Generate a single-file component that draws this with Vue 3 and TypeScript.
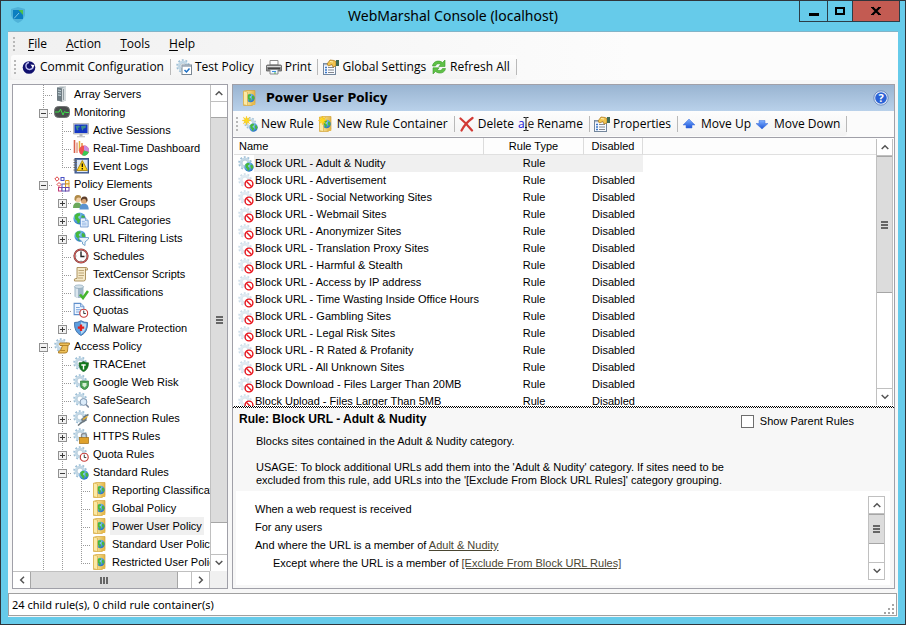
<script setup lang="ts">
import { ref } from 'vue'

type Guide = 'line' | 'tee' | 'end'

interface Node {
  label: string
  icon: string
  guides: Guide[]
  box?: 'plus' | 'minus'
}

interface Tool {
  label: string
  icon: string
  sep?: boolean
}

const menus = ['File', 'Action', 'Tools', 'Help']

const mainTools: Tool[] = [
  { label: 'Commit Configuration', icon: 'commit', sep: true },
  { label: 'Test Policy', icon: 'test', sep: true },
  { label: 'Print', icon: 'print', sep: true },
  { label: 'Global Settings', icon: 'props' },
  { label: 'Refresh All', icon: 'refresh', sep: true },
]

const policyTools: Tool[] = [
  { label: 'New Rule', icon: 'newrule' },
  { label: 'New Rule Container', icon: 'newfolder', sep: true },
  { label: 'Delete', icon: 'delete' },
  { label: 'Rename', icon: 'rename', sep: true },
  { label: 'Properties', icon: 'props', sep: true },
  { label: 'Move Up', icon: 'up' },
  { label: 'Move Down', icon: 'down', sep: true },
]

const nodes: Node[] = [
  { label: 'Array Servers', icon: 'server', guides: ['tee'] },
  { label: 'Monitoring', icon: 'pulse', guides: ['tee'], box: 'minus' },
  { label: 'Active Sessions', icon: 'screen', guides: ['line', 'tee'] },
  { label: 'Real-Time Dashboard', icon: 'charts', guides: ['line', 'tee'] },
  { label: 'Event Logs', icon: 'eventlog', guides: ['line', 'end'] },
  { label: 'Policy Elements', icon: 'elements', guides: ['tee'], box: 'minus' },
  { label: 'User Groups', icon: 'users', guides: ['line', 'tee'], box: 'plus' },
  { label: 'URL Categories', icon: 'globedoc', guides: ['line', 'tee'], box: 'plus' },
  { label: 'URL Filtering Lists', icon: 'globefilter', guides: ['line', 'tee'], box: 'plus' },
  { label: 'Schedules', icon: 'clock', guides: ['line', 'tee'] },
  { label: 'TextCensor Scripts', icon: 'script', guides: ['line', 'tee'] },
  { label: 'Classifications', icon: 'classify', guides: ['line', 'tee'] },
  { label: 'Quotas', icon: 'quota', guides: ['line', 'tee'] },
  { label: 'Malware Protection', icon: 'malware', guides: ['line', 'end'], box: 'plus' },
  { label: 'Access Policy', icon: 'access', guides: ['tee'], box: 'minus' },
  { label: 'TRACEnet', icon: 'trace', guides: ['line', 'tee'] },
  { label: 'Google Web Risk', icon: 'webrisk', guides: ['line', 'tee'] },
  { label: 'SafeSearch', icon: 'safesearch', guides: ['line', 'tee'] },
  { label: 'Connection Rules', icon: 'connection', guides: ['line', 'tee'], box: 'plus' },
  { label: 'HTTPS Rules', icon: 'https', guides: ['line', 'tee'], box: 'plus' },
  { label: 'Quota Rules', icon: 'quotarule', guides: ['line', 'tee'], box: 'plus' },
  { label: 'Standard Rules', icon: 'rule', guides: ['line', 'tee'], box: 'minus' },
  { label: 'Reporting Classifications', icon: 'folder', guides: ['line', 'line', 'tee'] },
  { label: 'Global Policy', icon: 'folder', guides: ['line', 'line', 'tee'] },
  { label: 'Power User Policy', icon: 'folder', guides: ['line', 'line', 'tee'] },
  { label: 'Standard User Policy', icon: 'folder', guides: ['line', 'line', 'tee'] },
  { label: 'Restricted User Policy', icon: 'folder', guides: ['line', 'line', 'end'] },
]

const rules = [
  'Block URL - Adult & Nudity',
  'Block URL - Advertisement',
  'Block URL - Social Networking Sites',
  'Block URL - Webmail Sites',
  'Block URL - Anonymizer Sites',
  'Block URL - Translation Proxy Sites',
  'Block URL - Harmful & Stealth',
  'Block URL - Access by IP address',
  'Block URL - Time Wasting Inside Office Hours',
  'Block URL - Gambling Sites',
  'Block URL - Legal Risk Sites',
  'Block URL - R Rated & Profanity',
  'Block URL - All Unknown Sites',
  'Block Download - Files Larger Than 20MB',
  'Block Upload - Files Larger Than 5MB',
].map((name, i) => ({ name, type: 'Rule', disabled: i > 0 }))

const selectedNode = ref('Power User Policy')
const selectedRule = ref(0)
const showParent = ref(false)
</script>

<template>
  <div class="window">
    <svg class="sprite" aria-hidden="true">
      <defs>
        <radialGradient id="gGlobe" cx="0.35" cy="0.3" r="0.8">
          <stop offset="0" stop-color="#9be0fa" /><stop offset="1" stop-color="#1763c0" />
        </radialGradient>
        <linearGradient id="gFolder" x1="0" y1="0" x2="1" y2="0">
          <stop offset="0" stop-color="#fdeeae" /><stop offset="1" stop-color="#e3b648" />
        </linearGradient>
        <linearGradient id="gBlue" x1="0" y1="0" x2="0" y2="1">
          <stop offset="0" stop-color="#7fb0ff" /><stop offset="1" stop-color="#1d55d8" />
        </linearGradient>
        <symbol id="gear" viewBox="0 0 16 16">
          <circle cx="7" cy="7" r="5.900" fill="none" stroke="#9dbfd6" stroke-width="1.800" stroke-dasharray="1.85 1.85" />
          <circle cx="7" cy="7" r="4.200" fill="none" stroke="#c3d8e6" stroke-width="2.400" />
          <circle cx="7" cy="7" r="2.900" fill="#fff" stroke="#93b4ca" stroke-width="0.600" />
        </symbol>
        <symbol id="globe" viewBox="0 0 16 16">
          <circle cx="8" cy="8" r="7.500" fill="url(#gGlobe)" />
          <path d="M2 4 5 1.500 8.500 1.500 9 4 6.500 5.500 6.500 7.500 9 9.500 8 13 6 14.500 5 11 2.500 8.500ZM11 4 14 5 15 8.500 12.500 12 11 9 10 6.500Z" fill="#46b83c" />
        </symbol>
        <symbol id="clockface" viewBox="0 0 16 16">
          <circle cx="8" cy="8" r="6.700" fill="#fff" stroke="#c9403c" stroke-width="2" />
          <path d="M8 3.500V8.500H11.500" fill="none" stroke="#222" stroke-width="1.500" />
        </symbol>
        <symbol id="star" viewBox="0 0 16 16">
          <path d="M8 0 9.500 5 14 2 11 6.500 16 8 11 9.500 14 14 9.500 11 8 16 6.500 11 2 14 5 9.500 0 8 5 6.500 2 2 6.500 5Z" fill="#ffd91c" stroke="#f0b400" stroke-width="0.500" />
        </symbol>
        <symbol id="i-logo" viewBox="0 0 16 16">
          <path d="M8 0 15 2V8Q14 13 8 16 2 13 1 8V2Z" fill="#4fb2d8" />
          <rect x="3" y="3" width="10" height="9" fill="#0b7fc0" />
          <path d="M8.500 3H13V8Z" fill="#4fc04a" /><path d="M4 11.500 9 6" stroke="#7cc6e6" fill="none" />
        </symbol>
        <symbol id="i-commit" viewBox="0 0 16 16">
          <circle cx="8" cy="8.500" r="6.300" fill="#10106e" />
          <path d="M8 3.500A3.500 3.500 0 0 0 5.500 9 4 4 0 0 0 12 8.500" fill="none" stroke="#b9b9ee" stroke-width="1.500" />
          <path d="M9.500 5.500 13.500 6 12 9.500Z" fill="#fff" /><circle cx="8.500" cy="7.500" r="1.800" fill="#10106e" />
        </symbol>
        <symbol id="i-test" viewBox="0 0 16 16">
          <use href="#gear" width="16" height="16" />
          <rect x="6" y="6" width="9.500" height="9.500" fill="#fff" stroke="#7a8794" /><path d="M6 7H15" stroke="#98a6b5" stroke-width="1.500" />
          <path d="M8.500 11 10.500 13 13.500 9.500" fill="none" stroke="#1c6fc4" stroke-width="1.500" />
        </symbol>
        <symbol id="i-print" viewBox="0 0 16 16">
          <path d="M4 1.500H12V6H4Z" fill="#fff" stroke="#8b8b8b" />
          <path d="M1.500 6H14.500Q15.500 6 15.500 7V12H.5V7Q.5 6 1.500 6Z" fill="#8a8a8a" stroke="#5b5b5b" stroke-width="0.800" />
          <path d="M1 7.500H15" stroke="#d8d8d8" /><path d="M2 9.500H14" stroke="#444" stroke-width="1.600" />
          <path d="M4 10.500H12V15H4Z" fill="#eef6ff" stroke="#8b8b8b" /><path d="M6 12.500H10" stroke="#3c8ee0" /><path d="M8 14H10" stroke="#4cb34c" />
        </symbol>
        <symbol id="i-props" viewBox="0 0 16 16">
          <rect x="0.500" y="4.500" width="12" height="11" fill="#f7faff" stroke="#73869c" /><path d="M1 5.500H12" stroke="#a8b7cb" stroke-width="1.500" />
          <path d="M2 8.500H4M2 11H4M2 13.500H4" stroke="#3977c9" stroke-width="1.300" /><path d="M5 8.500H11M5 11H11M5 13.500H11" stroke="#85898f" />
          <path d="M4 5 7 1 11 1.500 13 2.500V7L10 8 9 5.500 5.500 7Z" fill="#f0c34e" stroke="#a8741a" stroke-width="0.700" /><path d="M7 2.500 10 3" stroke="#fff1b0" />
          <rect x="13" y="1" width="3" height="6" fill="#3e6a56" />
        </symbol>
        <symbol id="i-refresh" viewBox="0 0 16 16">
          <path d="M1.500 7C2 2.500 7.500.500 11.500 3.500L14 1V7.500H7.800L9.800 5.300C7.500 4 5 5 4.500 7Z" fill="#5fc146" stroke="#3a9a2c" stroke-width="0.600" />
          <path d="M14.500 9.500C14 14 8.500 15.500 4.500 12.500L2 15V8.800H8.200L6.200 11C8.500 12 11 11.500 11.500 9.500Z" fill="#5fc146" stroke="#3a9a2c" stroke-width="0.600" />
        </symbol>
        <symbol id="i-folder" viewBox="0 0 16 16">
          <path d="M1.500 1.500 4 .500H13V13.500L10 15.500H1.500Z" fill="url(#gFolder)" stroke="#d3a53c" stroke-width="0.700" />
          <use href="#globe" x="4" y="3" width="9" height="10" />
          <path d="M1.500 1 5.500 2V15.800L1.500 14.500Z" fill="#fbe9a6" stroke="#d6a93f" stroke-width="0.600" />
          <path d="M9.500 13.500 13.200 12.500V15H9.500Z" fill="#e6b94e" />
        </symbol>
        <symbol id="i-rule" viewBox="0 0 16 16">
          <use href="#gear" width="16" height="16" /><use href="#globe" x="6" y="6" width="10" height="10" />
        </symbol>
        <symbol id="i-newrule" viewBox="0 0 16 16">
          <use href="#gear" width="14" height="14" x="2" y="1" /><use href="#globe" x="7" y="7" width="9" height="9" /><use href="#star" width="9" height="9" />
        </symbol>
        <symbol id="i-newfolder" viewBox="0 0 16 16">
          <use href="#i-folder" width="16" height="16" /><use href="#star" width="9" height="9" />
        </symbol>
        <symbol id="i-delete" viewBox="0 0 16 16">
          <path d="M1.500 2.500Q7 7 13 14.500M13.500 2Q6 7.500 2.500 14.500" fill="none" stroke="#d23a35" stroke-width="2.200" stroke-linecap="round" />
        </symbol>
        <symbol id="i-rename" viewBox="0 0 16 16">
          <text x="0" y="12" class="blue-letter">a</text><text x="9.500" y="12" class="dark-letter">e</text>
          <path d="M5.500 1.500H7.500L8 2 8.500 1.500H10.500M8 2V14M5.500 14.500H7.500L8 14 8.500 14.500H10.500M7 11.500H9" fill="none" stroke="#111" />
        </symbol>
        <symbol id="i-up" viewBox="0 0 16 16"><path d="M7 3 13 9H10V12H4V9H1Z" fill="url(#gBlue)" stroke="#3c6fd8" stroke-width="0.500" /></symbol>
        <symbol id="i-down" viewBox="0 0 16 16"><path d="M7 13 13 7.500H10V4.500H4V7.500H1Z" fill="url(#gBlue)" stroke="#3c6fd8" stroke-width="0.500" /></symbol>
        <symbol id="i-help" viewBox="0 0 16 16">
          <circle cx="8" cy="8" r="6.400" fill="#2a62d6" stroke="#e3ebf8" stroke-width="1.200" /><circle cx="8" cy="8" r="7.200" fill="none" stroke="#5878b4" stroke-width="0.700" />
          <text x="8" y="12" text-anchor="middle" class="help-letter">?</text>
        </symbol>
        <symbol id="i-server" viewBox="0 0 16 16">
          <path d="M3 1.500 6 .500H12V14.500L8.500 15.800 3 14.500Z" fill="#a9b3b8" /><path d="M3 1.500 8 2.500V15.800L3 14.500Z" fill="#6f7c83" /><path d="M8 2.500 12 .500V14.500L8 15.800Z" fill="#d5dbdd" />
          <path d="M4 4 7 4.500M4 6.500 7 7M4 9 7 9.500" stroke="#c5d6dc" /><path d="M9.500 3V14" stroke="#8f9a9f" />
        </symbol>
        <symbol id="i-pulse" viewBox="0 0 16 16">
          <rect x="0.500" y="2.500" width="15" height="11" rx="4" fill="#4a4d4d" stroke="#6f7373" /><path d="M1 8H5L6.500 5 9 11 10.500 7.500 12 8.500H15" fill="none" stroke="#3be04b" />
        </symbol>
        <symbol id="i-screen" viewBox="0 0 16 16">
          <path d="M.5 1.500H15.500V12H.5Z" fill="#d6d8da" stroke="#9a9da0" stroke-width="0.600" /><path d="M1.500 2.500H14.500V11H1.500Z" fill="#1436c4" />
          <path d="M2.500 4 6 3.500 7 5 5 6 5.500 8 4 8.500ZM8 4 13 3.500 12.500 6 10.500 6.500 9.500 9 8.500 6.500Z" fill="#4fb070" opacity="0.700" /><path d="M6.500 12H9.500V14H6.500Z" fill="#b5b8ba" /><path d="M4 14.700H12" stroke="#c2c5c8" stroke-width="1.300" />
        </symbol>
        <symbol id="i-charts" viewBox="0 0 16 16">
          <path d="M1.500 0V13" stroke="#d8604a" stroke-width="1.600" /><path d="M4 2.500V13" stroke="#e8a08c" stroke-width="1.600" /><path d="M6.500 1V11" stroke="#d9b53c" stroke-width="1.500" /><path d="M9 3V10" stroke="#e58a3c" stroke-width="1.500" />
          <circle cx="11" cy="10.500" r="5" fill="#ef5252" /><path d="M11 10.500V5.500A5 5 0 0 1 15.800 12Z" fill="#c98ae0" /><path d="M11 10.500 15.800 12A5 5 0 0 1 9 15.200Z" fill="#38c957" />
        </symbol>
        <symbol id="i-eventlog" viewBox="0 0 16 16">
          <rect x="2" y="0.500" width="13.500" height="14.500" fill="#5a78ad" stroke="#3a5286" /><rect x="4" y="2" width="10.500" height="12" fill="#dce6f3" />
          <path d="M.5 2H4M.5 4.500H4M.5 7H4M.5 9.500H4M.5 12H4" stroke="#666" /><path d="M9.300 2.500 14.500 12.500H4Z" fill="#ffd31a" stroke="#a37c00" stroke-width="0.800" stroke-linejoin="round" /><path d="M9.300 5.500V9M9.300 10V11.500" stroke="#111" stroke-width="1.300" />
        </symbol>
        <symbol id="i-elements" viewBox="0 0 16 16">
          <path d="M3 .800 5.200 3 3 5.200.8 3Z" fill="#fff" stroke="#d44" /><rect x="7" y="1.500" width="3" height="3" fill="#fff" stroke="#4850c4" /><path d="M5 6.500 7 8.500 5 10.500 3 8.500Z" fill="#fff" stroke="#d44" />
          <path d="M11.500 4.500H15V8H11.500Z" fill="#fff3cc" stroke="#d8971f" /><rect x="8" y="8" width="3.500" height="3.500" fill="#fff" stroke="#4e57b8" /><rect x="11.500" y="8" width="3.500" height="3.500" fill="#fff3cc" stroke="#d8971f" />
          <rect x="4.500" y="11.500" width="3.500" height="3.500" fill="#fff" stroke="#c03a78" /><rect x="8" y="11.500" width="3.500" height="3.500" fill="#fff" stroke="#4e57b8" /><rect x="11.500" y="11.500" width="3.500" height="3.500" fill="#fff" stroke="#6a44a8" />
        </symbol>
        <symbol id="i-users" viewBox="0 0 16 16">
          <path d="M0 14Q0 8.500 4.500 8.500 8.500 8.500 9 14Z" fill="#6ba85a" /><circle cx="5" cy="5" r="3.200" fill="#f0cda4" /><path d="M1.500 6Q1 1 5 1 8.500 1 8 4 5 2.800 3.500 4.500L3 7Z" fill="#b08a48" />
          <path d="M6.500 15.500Q6.500 9.500 11 9.500 15.500 9.500 15.800 15.500Z" fill="#5a93cf" /><circle cx="11" cy="6.500" r="3.200" fill="#d9a777" /><path d="M8 7Q7.500 2.500 11.500 2.500 15 2.500 14.500 7L13.500 8Q13.500 5 11 4.800 9 5 8 7Z" fill="#5b3d2a" />
        </symbol>
        <symbol id="doc" viewBox="0 0 16 16"><path d="M1.500.500H10L14.500 5V15.500H1.500Z" fill="#eef5ff" stroke="#5f8fcb" stroke-width="1.400" /><path d="M10 .500V5H14.500" fill="#c6dbf5" stroke="#5f8fcb" /><path d="M4 6H9M4 9H12M4 12H12" stroke="#7ba7dd" stroke-width="1.400" /></symbol>
        <symbol id="i-globedoc" viewBox="0 0 16 16"><use href="#globe" width="13" height="13" /><use href="#doc" x="6.500" y="5" width="9.500" height="11" /></symbol>
        <symbol id="i-globefilter" viewBox="0 0 16 16"><use href="#globe" x="1" width="12" height="12" /><path d="M6 7.500H15.500V9L12 12V15.500L9.500 14V12L6 9Z" fill="#e9f3fb" stroke="#6c9fc8" stroke-width="0.900" /></symbol>
        <symbol id="i-clock" viewBox="0 0 16 16">
          <circle cx="8" cy="8" r="6.600" fill="#fdfdfd" stroke="#7c4140" stroke-width="2" /><circle cx="8" cy="8" r="6.600" fill="none" stroke="#d45a55" stroke-width="1" /><path d="M8 3.500V8.500H11.500" fill="none" stroke="#222" stroke-width="1.400" /><path d="M8 2.500V3.300M8 12.700V13.500M2.500 8H3.300M12.700 8H13.500" stroke="#555" />
        </symbol>
        <symbol id="i-script" viewBox="0 0 16 16">
          <path d="M4 1.500H13Q15 1.500 14.500 4H12.500V13Q12.500 15 10.500 15H1.500Q.5 12.500 3 12.500H4Z" fill="#f5e9c8" stroke="#a68a55" stroke-width="0.900" /><path d="M5.500 4.500H11M5.500 7H11M5.500 9.500H11M5 12H10" stroke="#bca678" /><path d="M12.500 4V2.500" stroke="#a68a55" />
        </symbol>
        <symbol id="i-classify" viewBox="0 0 16 16">
          <path d="M1.500 2.500V12.500Q6 15.500 10.500 12.500V2.500Z" fill="#9fb7c8" /><path d="M2.500 3.500V13Q4 14 5 14V4Z" fill="#dbe6ee" /><ellipse cx="6" cy="2.700" rx="4.500" ry="1.800" fill="#d4e1ea" stroke="#8ba5b6" stroke-width="0.700" />
          <path d="M7 10.500 10 14 15 7" fill="none" stroke="#45b52d" stroke-width="2.600" />
        </symbol>
        <symbol id="i-quota" viewBox="0 0 16 16"><use href="#doc" width="12" height="14" /><use href="#clockface" x="6" y="6.500" width="9.500" height="9.500" /></symbol>
        <symbol id="i-malware" viewBox="0 0 16 16">
          <path d="M8 .700Q11 2.700 14.500 2.500 15 12 8 15.500 1 12 1.500 2.500 5 2.700 8 .700Z" fill="#5c9fe0" stroke="#4876ae" /><path d="M8 2Q10 3.500 13.300 3.600 13.300 11 8 14.200Z" fill="#b9daf5" /><path d="M8 4.500V11M4.800 7.700H11.200" stroke="#e02020" stroke-width="2.300" />
        </symbol>
        <symbol id="i-access" viewBox="0 0 16 16"><use href="#gear" width="16" height="16" /><path d="M6 5H15.500Q16 7 14 7.500L13.500 13Q13.500 15 11 15H4.500Q4 12.500 6.500 12.500L8.500 7.500H6Q4.800 6 6 5Z" fill="#ecc05a" stroke="#a9781f" stroke-width="0.900" /><path d="M6.500 7.500H14M6.500 12.500H11" stroke="#a9781f" stroke-width="0.800" /></symbol>
        <symbol id="i-trace" viewBox="0 0 16 16"><use href="#gear" width="16" height="16" /><path d="M10.500 5.500Q13 7 15.500 6.800 15.500 13.500 10.500 15.800 6 13.500 6 6.800 8.500 7 10.500 5.500Z" fill="#117a1f" stroke="#0a5414" stroke-width="0.600" /><path d="M8.300 9H12.700M10.500 9V13.500" stroke="#fff" stroke-width="1.400" /></symbol>
        <symbol id="i-webrisk" viewBox="0 0 16 16"><use href="#gear" width="16" height="16" /><path d="M7.500 7H15.500V11.500Q15 14.500 11.500 15.800 8 14.500 7.500 11.500Z" fill="#4fa356" stroke="#2f7d3a" stroke-width="0.700" /><path d="M9.500 9H13.500V11.500L11.500 13.500 9.500 11.500Z" fill="#d6efd4" /></symbol>
        <symbol id="i-safesearch" viewBox="0 0 16 16"><use href="#gear" width="16" height="16" /><circle cx="10.500" cy="10" r="3.400" fill="#dcecfa" stroke="#8299b3" /><path d="M13 12.500 15.800 15.500" stroke="#7d8ba0" stroke-width="1.600" /></symbol>
        <symbol id="i-connection" viewBox="0 0 16 16"><use href="#gear" width="16" height="16" /><path d="M15.500 4.500 11 7 13 10 8.500 12.500 5 15.500" fill="none" stroke="#6a747b" stroke-width="1.500" /><path d="M8 9 13 6 14 8.500 9 12Z" fill="#777f85" /><path d="M10 9.500 14.500 6.500" stroke="#ecb52c" stroke-width="1.500" /></symbol>
        <symbol id="i-https" viewBox="0 0 16 16"><use href="#gear" width="16" height="16" /><path d="M8.500 10V7.500Q8.500 5.500 11 5.500 13.500 5.500 13.500 7.500V10" fill="none" stroke="#8b8f94" stroke-width="1.400" /><rect x="6.500" y="9.500" width="9" height="6" fill="#dfa12c" stroke="#9f6c13" stroke-width="0.700" /></symbol>
        <symbol id="i-quotarule" viewBox="0 0 16 16"><use href="#gear" width="16" height="16" /><use href="#clockface" x="6.500" y="6.500" width="9.500" height="9.500" /></symbol>
        <symbol id="i-blocked" viewBox="0 0 16 16"><use href="#gear" width="16" height="16" opacity="0.500" /><circle cx="11" cy="11" r="3.900" fill="#fff" stroke="#e8141c" stroke-width="1.400" /><path d="M8.300 8.300 13.700 13.700" stroke="#e8141c" stroke-width="1.400" /></symbol>
        <symbol id="a-up" viewBox="0 0 8 6"><path d="M.7 5 4 1.700 7.300 5" fill="none" stroke="#555" stroke-width="1.500" /></symbol>
        <symbol id="a-down" viewBox="0 0 8 6"><path d="M.7 1 4 4.300 7.300 1" fill="none" stroke="#555" stroke-width="1.500" /></symbol>
        <symbol id="a-left" viewBox="0 0 6 8"><path d="M5 .700 1.700 4 5 7.300" fill="none" stroke="#555" stroke-width="1.500" /></symbol>
        <symbol id="a-right" viewBox="0 0 6 8"><path d="M1 .700 4.300 4 1 7.300" fill="none" stroke="#555" stroke-width="1.500" /></symbol>
      </defs>
    </svg>

    <header class="titlebar">
      <svg class="icon logo"><use href="#i-logo" /></svg>
      <h1>WebMarshal Console (localhost)</h1>
      <div class="caption">
        <button type="button" class="cap" aria-label="Minimize"><svg width="10" height="10"><path d="M0 8.500H10" stroke="#000" stroke-width="3" /></svg></button>
        <button type="button" class="cap middle" aria-label="Maximize"><svg width="10" height="10"><rect x="1" y="2" width="8" height="6" fill="none" stroke="#000" stroke-width="2" /></svg></button>
        <button type="button" class="cap close" aria-label="Close"><svg width="10" height="10"><path d="M1.500 1.500 8.500 8.500M8.500 1.500 1.500 8.500" stroke="#000" stroke-width="2.200" /><path d="M0 1.500H3M7 1.500H10M0 8.500H3M7 8.500H10" stroke="#000" /></svg></button>
      </div>
    </header>

    <main class="client">
      <nav class="menubar">
        <span class="grip"></span>
        <button v-for="m in menus" :key="m" type="button" class="menu"><u>{{ m[0] }}</u>{{ m.slice(1) }}</button>
      </nav>
      <div class="strip">
        <div class="toolbar">
          <span class="grip"></span>
          <template v-for="t in mainTools" :key="t.label">
            <button type="button" class="tool"><svg class="icon"><use :href="'#i-' + t.icon" /></svg>{{ t.label }}</button>
            <span v-if="t.sep" class="sep"></span>
          </template>
        </div>
      </div>

      <div class="body">
        <section class="treepane">
          <div class="treemain">
            <ul class="tree">
              <li v-for="n in nodes" :key="n.label" class="node">
                <span v-for="(g, i) in n.guides" :key="i" class="guide" :class="g">
                  <button v-if="n.box && i === n.guides.length - 1" type="button" class="box" :class="n.box" :aria-label="n.label"></button>
                </span>
                <svg class="icon"><use :href="'#i-' + n.icon" /></svg>
                <button type="button" class="label" :class="{ on: n.label === selectedNode }" @click="selectedNode = n.label">{{ n.label }}</button>
              </li>
            </ul>
            <div class="vscroll">
              <button type="button" aria-label="Up"><svg width="8" height="6"><use href="#a-up" /></svg></button>
              <span class="gap-start"></span><span class="thumb tree-thumb"><i></i></span><span class="gap-end"></span>
              <button type="button" aria-label="Down"><svg width="8" height="6"><use href="#a-down" /></svg></button>
            </div>
          </div>
          <div class="hrow">
            <div class="hscroll">
              <button type="button" aria-label="Left"><svg width="6" height="8"><use href="#a-left" /></svg></button>
              <span class="thumb"><i></i></span><span class="hgap"></span>
              <button type="button" aria-label="Right"><svg width="6" height="8"><use href="#a-right" /></svg></button>
            </div>
          </div>
        </section>

        <section class="policy">
          <div class="banner">
            <svg class="icon"><use href="#i-folder" /></svg>
            <h2>Power User Policy</h2>
            <button type="button" class="help" aria-label="Help"><svg class="icon"><use href="#i-help" /></svg></button>
          </div>
          <div class="subbar">
            <div class="toolbar">
              <span class="grip"></span>
              <template v-for="t in policyTools" :key="t.label">
                <button type="button" class="tool"><svg class="icon"><use :href="'#i-' + t.icon" /></svg>{{ t.label }}</button>
                <span v-if="t.sep" class="sep"></span>
              </template>
            </div>
          </div>

          <div class="list">
            <div class="rows">
              <table>
                <colgroup><col class="c-name" /><col class="c-type" /><col class="c-dis" /><col /></colgroup>
                <thead>
                  <tr><th class="name">Name</th><th>Rule Type</th><th>Disabled</th><td></td></tr>
                </thead>
                <tbody>
                  <tr v-for="(r, i) in rules" :key="r.name" :class="{ on: i === selectedRule }" @click="selectedRule = i">
                    <td class="first"><div class="cell"><svg class="icon"><use :href="r.disabled ? '#i-blocked' : '#i-rule'" /></svg><span>{{ r.name }}</span></div></td>
                    <td class="mid">{{ r.type }}</td>
                    <td class="mid">{{ r.disabled ? 'Disabled' : '' }}</td>
                    <td class="rest"></td>
                  </tr>
                </tbody>
              </table>
            </div>
            <div class="vscroll">
              <button type="button" aria-label="Up"><svg width="8" height="6"><use href="#a-up" /></svg></button>
              <span class="thumb list-thumb"><i></i></span><span class="list-gap"></span>
              <button type="button" aria-label="Down"><svg width="8" height="6"><use href="#a-down" /></svg></button>
            </div>
          </div>
          <div class="splitter"></div>

          <div class="detail">
            <div class="detail-head">
              <h3>Rule: Block URL - Adult &amp; Nudity</h3>
              <label class="parent"><input v-model="showParent" type="checkbox" />Show Parent Rules</label>
            </div>
            <div class="desc">
              <p>Blocks sites contained in the Adult &amp; Nudity category.</p>
              <p>USAGE: To block additional URLs add them into the 'Adult &amp; Nudity' category. If sites need to be excluded from this rule, add URLs into the '[Exclude From Block URL Rules]' category grouping.</p>
            </div>
            <div class="conditions">
              <div class="lines">
                <p>When a web request is received</p>
                <p>For any users</p>
                <p>And where the URL is a member of <a href="#">Adult &amp; Nudity</a></p>
                <p class="inner">Except where the URL is a member of <a href="#">[Exclude From Block URL Rules]</a></p>
              </div>
              <div class="vscroll boxed">
                <button type="button" aria-label="Up"><svg width="8" height="6"><use href="#a-up" /></svg></button>
                <span class="thumb cond-thumb"><i></i></span><span class="cond-gap"></span>
                <button type="button" aria-label="Down"><svg width="8" height="6"><use href="#a-down" /></svg></button>
              </div>
            </div>
          </div>
        </section>
      </div>

      <footer class="status">
        <span>24 child rule(s), 0 child rule container(s)</span>
        <svg width="11" height="11"><path d="M8 0h2v2h-2zM4 4h2v2h-2zM8 4h2v2h-2zM0 8h2v2h-2zM4 8h2v2h-2zM8 8h2v2h-2z" fill="#a5a5a5" /></svg>
      </footer>
    </main>
  </div>
</template>

<style>
body {
  margin: 0;
}
</style>

<style scoped>
* {
  box-sizing: border-box;
}
.window {
  display: flex;
  flex-direction: column;
  height: 100vh;
  padding: 0 7px 7px;
  border: 1px solid #30343a;
  background: #66cbea;
  color: #000;
  font: 11px/13px "Liberation Sans", Arial, sans-serif;
  overflow: hidden;
}
.sprite {
  position: absolute;
  width: 0;
  height: 0;
}
.blue-letter,
.dark-letter {
  font: 12px "Open Sans", sans-serif;
  fill: #1414d2;
}
.dark-letter {
  fill: #222;
}
.help-letter {
  font: bold 11px "Open Sans", sans-serif;
  fill: #fff;
}
button {
  margin: 0;
  padding: 0;
  border: 0;
  background: none;
  color: inherit;
  font: inherit;
}
h1,
h2,
h3,
p,
ul {
  margin: 0;
  padding: 0;
  font-weight: normal;
}
.icon {
  flex: none;
  width: 16px;
  height: 16px;
}

.titlebar {
  display: grid;
  grid-template-columns: 1fr auto 1fr;
  flex: none;
  height: 30px;
}
.logo {
  margin: 6px 0 0 2px;
}
.titlebar h1 {
  font: 14px/30px "Noto Sans", sans-serif;
}
.caption {
  display: flex;
  justify-self: end;
  height: 21px;
  margin-right: -2px;
  border: 1px solid #2b3d47;
  border-top: 0;
}
.cap {
  display: grid;
  place-items: center;
  width: 27px;
}
.cap.middle {
  width: 26px;
  border-right: 1px solid #2b3d47;
  border-left: 1px solid #2b3d47;
}
.cap.close {
  width: 46px;
  background: #c35b52;
}

.client {
  display: flex;
  flex: 1;
  flex-direction: column;
  min-height: 0;
  border-top: 1px solid #82b4c8;
  background: #f7f7f7;
}
.menubar {
  display: flex;
  flex: none;
  align-items: center;
  gap: 19px;
  height: 23px;
  padding-left: 5px;
  background: linear-gradient(90deg, #f0f0f0, #fcfcfc 70%);
  font: 12px/20px "Open Sans", sans-serif;
}
.menubar .grip {
  margin-right: -6px;
}
.menu u {
  text-underline-offset: 2px;
}
.grip {
  flex: none;
  width: 2px;
  height: 14px;
  background: repeating-linear-gradient(#b8b8b8 0 2px, transparent 2px 4px);
}
.strip {
  display: flex;
  flex: none;
  height: 25px;
  padding: 0 0 1px 3px;
  background: linear-gradient(90deg, #f0f0f0, #fcfcfc 70%);
}
.toolbar {
  display: flex;
  align-items: center;
  gap: 5px;
  padding: 0 0 0 3px;
  border-radius: 3px;
  background: linear-gradient(#fdfdfd, #f3f3f3);
  font: 12px/20px "Open Sans", sans-serif;
}
.tool {
  display: flex;
  align-items: center;
  gap: 3px;
  white-space: nowrap;
}
.sep {
  width: 1px;
  height: 16px;
  margin-left: 1px;
  background: #b9b9b9;
}
.subbar .toolbar {
  gap: 4px;
}
.subbar .sep {
  margin-left: 2px;
}

.body {
  display: flex;
  flex: 1;
  gap: 4px;
  min-height: 0;
  padding: 4px 3px 4px 4px;
}
.treepane {
  display: flex;
  flex: none;
  flex-direction: column;
  width: 216px;
  border: 1px solid #a0a0a8;
  background: #fff;
}
.treemain {
  display: flex;
  flex: 1;
  min-height: 0;
}
.tree {
  flex: 1;
  min-width: 0;
  padding-left: 21px;
  overflow: hidden;
  list-style: none;
}
.node {
  display: flex;
  align-items: center;
  height: 18px;
  white-space: nowrap;
}
.guide {
  position: relative;
  flex: none;
  width: 19px;
  height: 18px;
}
.guide::before {
  content: "";
  position: absolute;
  top: 0;
  left: 9px;
  width: 1px;
  height: 18px;
  background: repeating-linear-gradient(#999 0 1px, transparent 1px 2px);
}
.guide.end::before {
  height: 11px;
}
.guide.tee::after,
.guide.end::after {
  content: "";
  position: absolute;
  top: 10px;
  left: 9px;
  width: 10px;
  height: 1px;
  background: repeating-linear-gradient(90deg, #999 0 1px, transparent 1px 2px);
}
.box {
  position: absolute;
  z-index: 1;
  top: 6px;
  left: 5px;
  width: 9px;
  height: 9px;
  border: 1px solid #919191;
  background: linear-gradient(#3c3c3c, #3c3c3c) center / 5px 1px no-repeat, #f2f2f2;
}
.box.plus {
  background: linear-gradient(#3c3c3c, #3c3c3c) center / 5px 1px no-repeat, linear-gradient(#3c3c3c, #3c3c3c) center / 1px 5px no-repeat, #f2f2f2;
}
.node .icon {
  margin: 0 2px 0 1px;
}
.label {
  height: 18px;
  padding: 0 2px;
}
.label.on {
  background: #f0f0f0;
}

.vscroll {
  display: flex;
  flex: none;
  flex-direction: column;
  width: 17px;
  border-left: 1px solid #c0c0c0;
  background: #fff;
}
.vscroll button,
.hscroll button {
  display: grid;
  flex: none;
  place-items: center;
  height: 17px;
}
.vscroll button:first-child {
  border-bottom: 1px solid #c0c0c0;
}
.vscroll button:last-child {
  border-top: 1px solid #c0c0c0;
}
.vscroll.boxed {
  height: 84px;
  border: 1px solid #c0c0c0;
}
.thumb {
  display: grid;
  place-items: center;
  background: #dcdcdc;
}
.vscroll .thumb {
  border: solid #a6a6a6;
  border-width: 1px 0;
}
.vscroll .thumb i {
  width: 7px;
  height: 8px;
  background: repeating-linear-gradient(#666 0 2px, transparent 2px 3px);
}
.gap-start {
  flex: 15;
}
.tree-thumb {
  flex: 406;
}
.gap-end {
  flex: 31;
}
.list-thumb {
  flex: 138;
}
.list-gap {
  flex: 97;
}
.cond-thumb {
  flex: 30;
}
.cond-gap {
  flex: 20;
}
.hrow {
  display: flex;
  flex: none;
  height: 17px;
  padding-right: 17px;
  background: #f0f0f0;
}
.hscroll {
  display: flex;
  flex: 1;
  border: solid #c0c0c0;
  border-width: 1px 1px 0 0;
  background: #fff;
}
.hscroll button {
  width: 17px;
  height: 16px;
}
.hscroll .thumb {
  flex: 151;
  border: solid #a6a6a6;
  border-width: 0 1px;
}
.hscroll .thumb i {
  width: 8px;
  height: 7px;
  background: repeating-linear-gradient(90deg, #666 0 2px, transparent 2px 3px);
}
.hgap {
  flex: 13;
  border-right: 1px solid #c0c0c0;
}

.policy {
  display: flex;
  flex: 1;
  flex-direction: column;
  min-width: 0;
  border: 1px solid #a0a0a8;
}
.banner {
  display: flex;
  flex: none;
  align-items: center;
  height: 26px;
  padding: 0 5px 0 9px;
  background: linear-gradient(#99b4d1, #b9d1ea);
}
.banner h2 {
  flex: 1;
  margin-left: 8px;
  font: bold 12px/26px "DejaVu Sans", sans-serif;
}
.help {
  display: flex;
}
.subbar {
  display: flex;
  flex: none;
  height: 27px;
  padding-bottom: 1px;
  border-bottom: 1px solid #a0a0a8;
  background: #fbfbfb;
}
.list {
  display: flex;
  flex: 1;
  min-height: 0;
  background: #fff;
}
.rows {
  flex: 1;
  min-width: 0;
  padding-left: 1px;
  overflow: hidden;
}
table {
  width: 100%;
  border-spacing: 0;
  table-layout: fixed;
}
.c-name {
  width: 250px;
}
.c-type {
  width: 100px;
}
.c-dis {
  width: 59px;
}
thead th,
thead td {
  height: 17px;
  padding: 0;
  border-bottom: 1px solid #e0e0e0;
  background: #fdfdfd;
  font-weight: normal;
}
thead th {
  border-right: 1px solid #dcdcdc;
}
th.name {
  padding-left: 5px;
  text-align: left;
}
tbody td {
  height: 17px;
  padding: 0;
}
tbody tr.on td {
  background: #f0f0f0;
}
tbody tr.on td.first {
  background: linear-gradient(90deg, #fff 20px, #f0f0f0 20px);
}
tbody tr.on td.rest {
  background: none;
}
.mid {
  text-align: center;
}
.cell {
  display: flex;
  align-items: center;
  gap: 1px;
  height: 17px;
  padding-left: 4px;
  white-space: nowrap;
}
.list .vscroll {
  margin: 1px 1px 1px 0;
  border-right: 1px solid #c0c0c0;
}
.splitter {
  flex: none;
  height: 2px;
  background: repeating-conic-gradient(#000 0 25%, #fff 0 50%) 0 0 / 2px 2px;
}
.detail {
  flex: none;
  padding: 3px 4px 3px 3px;
}
.detail-head {
  display: flex;
  align-items: center;
  justify-content: space-between;
  height: 20px;
  padding: 0 36px 0 3px;
}
.detail-head h3 {
  align-self: flex-start;
  font: bold 12px/16px "Liberation Sans", Arial, sans-serif;
}
.parent {
  display: flex;
  align-items: center;
  gap: 6px;
}
.parent input {
  appearance: none;
  width: 13px;
  height: 13px;
  margin: 0;
  border: 1px solid #6e6e6e;
  background: #fff;
}
.parent input:checked {
  background: #6e6e6e;
}
.desc {
  display: flex;
  flex-direction: column;
  gap: 13px;
  max-width: 490px;
  padding: 4px 0 4px 20px;
}
.conditions {
  display: flex;
  justify-content: space-between;
  padding: 5px 5px 5px 19px;
  background: #fff;
}
.lines {
  padding-top: 4px;
  line-height: 18px;
}
.lines .inner {
  padding-left: 18px;
}
.lines a {
  color: #4a4632;
}
.status {
  display: flex;
  flex: none;
  align-items: center;
  justify-content: space-between;
  height: 23px;
  margin: 0 1px 1px 0;
  padding: 0 1px 0 3px;
  border: 1px solid #a0a0a0;
  background: #fff;
  font: 11px/20px "Noto Sans", sans-serif;
}
.status svg {
  align-self: flex-end;
}
</style>
